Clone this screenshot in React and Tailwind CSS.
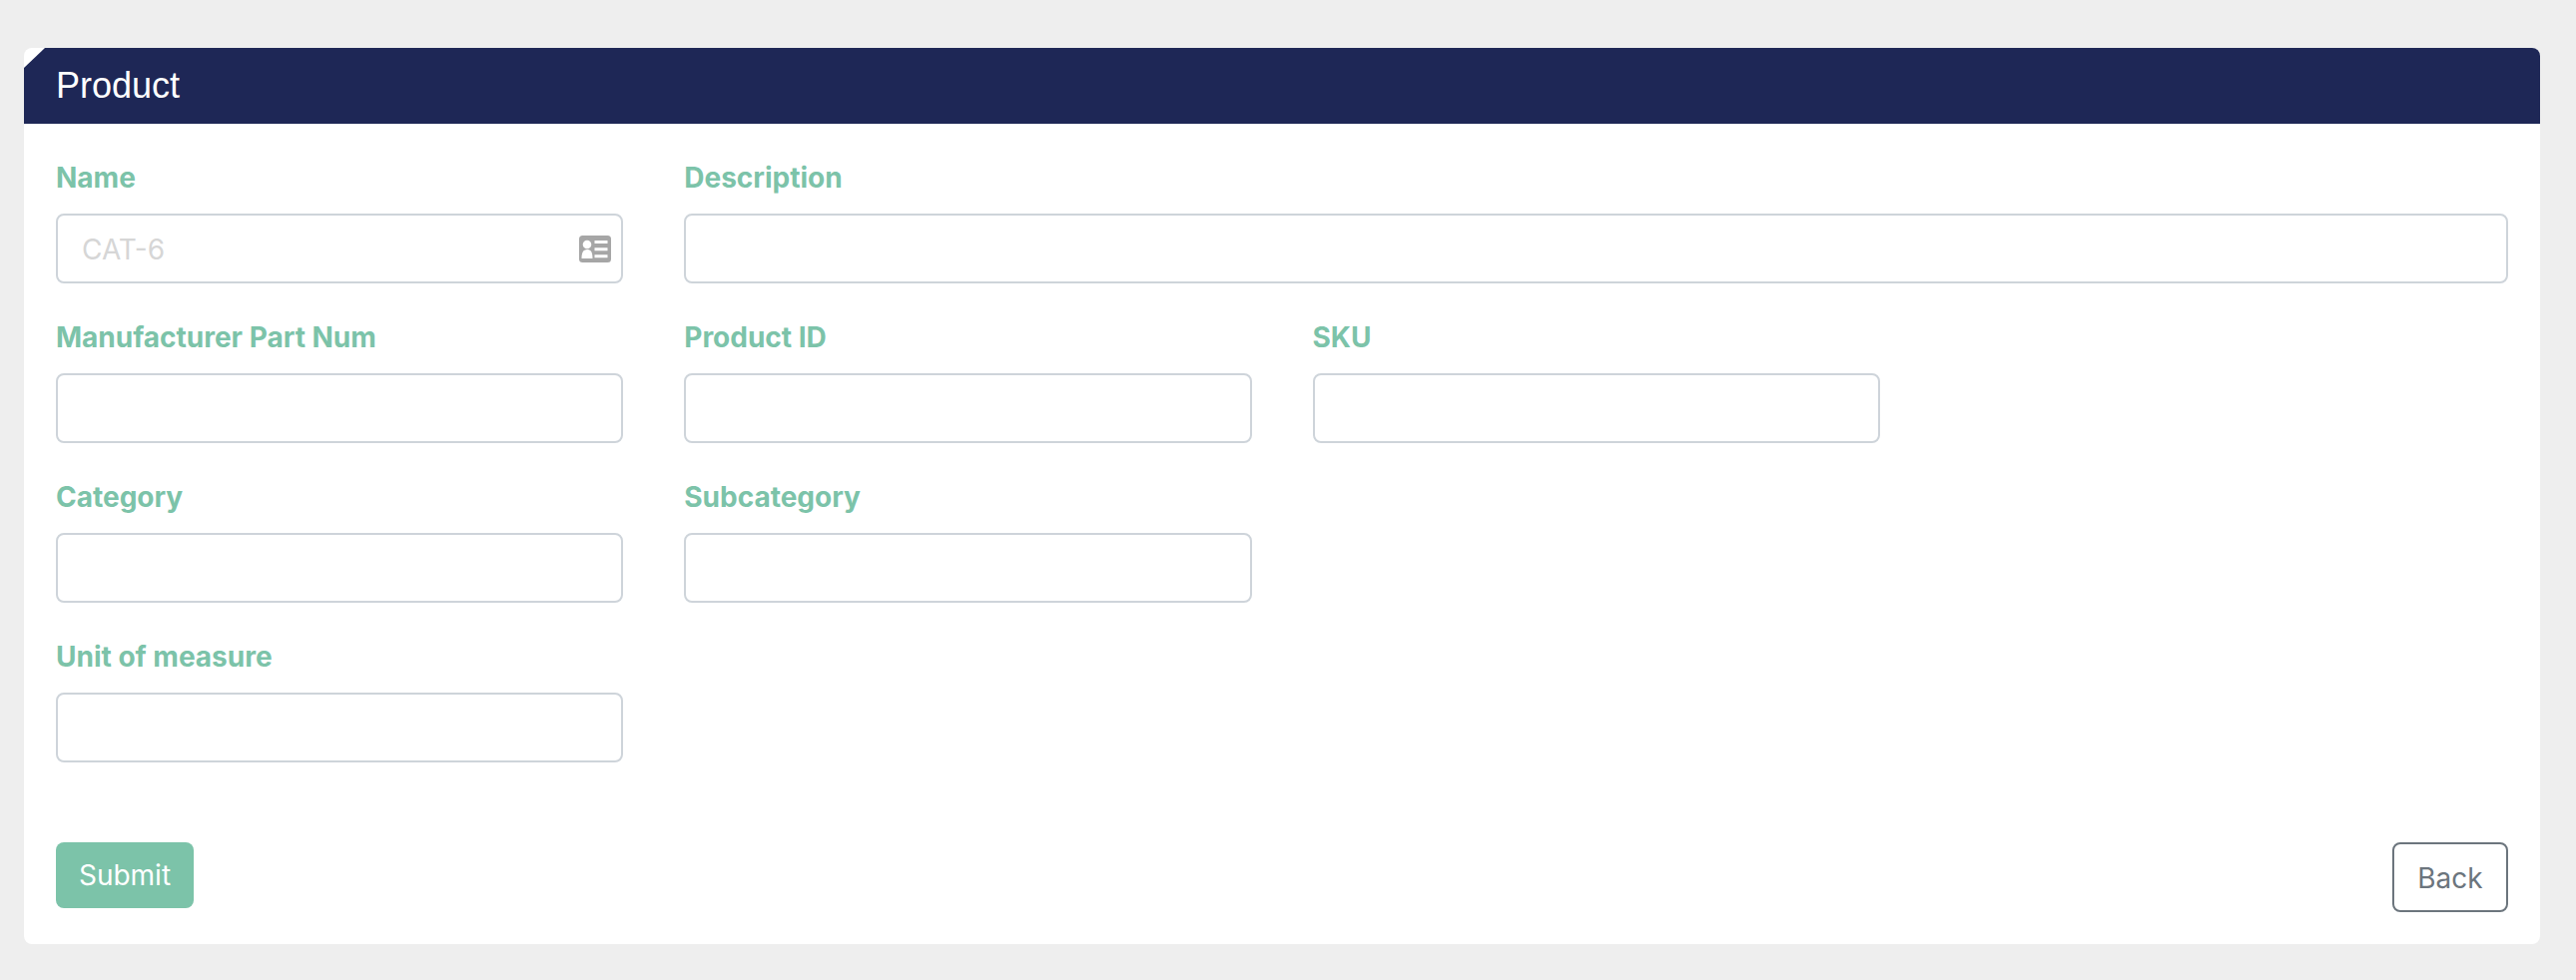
function IdCardIcon() {
  return (
    <svg viewBox="0 0 32 27" className="absolute right-[12px] top-[22px] w-[32px] h-[27px]">
      <rect width="32" height="27" rx="3.5" fill="#a6a6a6" />
      <circle cx="8" cy="9" r="4.3" fill="#fff" />
      <path d="M2.5 23c0-6 1.5-9 5.5-9s5.500 3 5.500 9z" fill="#fff" />
      <path d="M15.500 5h13v3h-13zM15.500 12.200h13v3h-13zM15.500 19.200h13v3h-13z" fill="#fff" />
    </svg>
  );
}

function Field({ label, placeholder, icon, className = '' }) {
  return (
    <div className={className}>
      <label className="block h-[47px] mb-[13px] font-['Inter',sans-serif] font-bold text-[28px] leading-[48px] text-[#7cc3a9]">
        {label}
      </label>
      <div className="relative">
        <input
          placeholder={placeholder}
          className="block w-full h-[70px] px-[24px] pt-[2px] rounded-[8px] border-2 border-[#ced4da] bg-white font-['Inter',sans-serif] text-[28px] placeholder:text-[#d6d6d6] outline-none"
        />
        {icon && <IdCardIcon />}
      </div>
    </div>
  );
}

export default function App() {
  return (
    <div className="min-h-[982px] bg-[#eeeeee] pt-[48px] px-[24px]">
      <div className="w-[2520px] h-[898px] bg-white rounded-[8px]">
        <div className="h-[76px] bg-[#1e2756] rounded-tr-[8px] pl-[32px] [clip-path:polygon(21px_0,100%_0,100%_100%,0_100%,0_20px)] font-['Liberation_Sans',sans-serif] text-[36px] leading-[76px] text-white">
          Product
        </div>
        <form className="px-[32px] pt-[30px]">
          <div className="grid grid-cols-4 gap-x-[61px] gap-y-[30px]">
            <Field label="Name" placeholder="CAT-6" icon />
            <Field label="Description" className="col-span-3" />
            <Field label="Manufacturer Part Num" />
            <Field label="Product ID" />
            <Field label="SKU" />
            <div />
            <Field label="Category" />
            <Field label="Subcategory" />
            <div />
            <div />
            <Field label="Unit of measure" />
          </div>
          <div className="flex justify-between items-start mt-[80px]">
            <button className="w-[138px] h-[66px] rounded-[8px] bg-[#7cc3a9] font-['Inter',sans-serif] text-[28px] text-white">
              Submit
            </button>
            <button className="w-[116px] h-[70px] pt-[1px] rounded-[8px] border-2 border-[#6c757d] bg-white font-['Inter',sans-serif] text-[28px] text-[#6c757d]">
              Back
            </button>
          </div>
        </form>
      </div>
    </div>
  );
}
